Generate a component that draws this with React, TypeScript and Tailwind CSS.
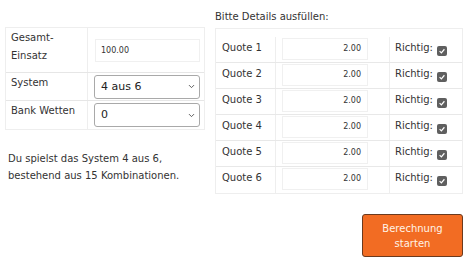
import { ChevronDown } from 'lucide-react';

const font = { fontFamily: '"DejaVu Sans", Verdana, sans-serif' };

function Check() {
  return (
    <span className="inline-flex h-[10px] w-[10px] items-center justify-center rounded-[2px] bg-[#5f5f5f]">
      <svg viewBox="0 0 10 10" className="h-[8px] w-[8px]">
        <path d="M2 5.2 L4.2 7.3 L8 2.8" fill="none" stroke="#fff" strokeWidth="1.5" />
      </svg>
    </span>
  );
}

function Select({ value }: { value: string }) {
  return (
    <div className="flex h-[24px] w-[106px] items-center justify-between rounded-[3px] border border-[#a9a9a9] bg-white pl-[6px] pr-[3px] text-[11px] text-[#222]">
      <span>{value}</span>
      <ChevronDown size={9} strokeWidth={2.5} className="text-[#555]" />
    </div>
  );
}

export default function App() {
  const quotes = [1, 2, 3, 4, 5, 6];

  return (
    <div className="flex h-[261px] w-[474px] gap-[10px] bg-white pl-[5px] text-[10px] leading-[18px] text-[#333]" style={font}>
      <div className="flex w-[200px] flex-col pt-[27px]">
        <div className="border border-[#eeeeee]">
          <div className="grid h-[45px] grid-cols-[82px_1fr] border-b border-[#e6e6e6]">
            <div className="border-r border-[#eeeeee] pl-[5px] pt-[1px]">
              Gesamt-
              <br />
              Einsatz
            </div>
            <div className="flex items-end pb-[10px] pl-[7px]">
              <div className="flex h-[23px] w-[105px] items-center border border-[#f0f0f0] pl-[5px] text-[8px] text-[#333]">
                100.00
              </div>
            </div>
          </div>
          <div className="grid h-[28px] grid-cols-[82px_1fr] border-b border-[#e6e6e6]">
            <div className="border-r border-[#eeeeee] pl-[5px] pt-[1px]">System</div>
            <div className="flex items-center pl-[6px]">
              <Select value="4 aus 6" />
            </div>
          </div>
          <div className="grid h-[28px] grid-cols-[82px_1fr]">
            <div className="border-r border-[#eeeeee] pl-[5px] pt-[1px]">Bank Wetten</div>
            <div className="flex items-center pl-[6px]">
              <Select value="0" />
            </div>
          </div>
        </div>
        <p className="mt-[20px] pl-[3px] leading-[17px]">
          Du spielst das System 4 aus 6,
          <br />
          bestehend aus 15 Kombinationen.
        </p>
      </div>

      <div className="flex w-[248px] flex-col">
        <div className="pt-[8px] leading-[18px]">Bitte Details ausfüllen:</div>
        <div className="mt-[2px] border border-[#eeeeee]">
          {quotes.map((q, i) => (
            <div
              key={q}
              className={`grid grid-cols-[60px_114px_1fr] ${i === 0 ? 'h-[34px] pt-[8px]' : 'h-[26px]'} ${i < 5 ? 'border-b border-[#e8e8e8]' : ''}`}
            >
              <div className="border-r border-[#eeeeee] pl-[6px] pt-[2px]">Quote {q}</div>
              <div className="border-r border-[#eeeeee] pl-[6px] pt-[1px]">
                <div className="flex h-[22px] w-[86px] items-center justify-end border border-[#f0f0f0] pr-[6px] text-[8px]">
                  2.00
                </div>
              </div>
              <div className="flex items-start gap-[4px] pl-[5px] pt-[2px]">
                <span>Richtig:</span>
                <span className="pt-[4px]">
                  <Check />
                </span>
              </div>
            </div>
          ))}
        </div>
        <div className="mt-[20px] flex justify-end">
          <button className="h-[43px] w-[101px] rounded-[3px] border border-[#6b3a1e] bg-[#f26c23] text-[10px] leading-[15px] text-[#fff3e6]">
            Berechnung
            <br />
            starten
          </button>
        </div>
      </div>
    </div>
  );
}
